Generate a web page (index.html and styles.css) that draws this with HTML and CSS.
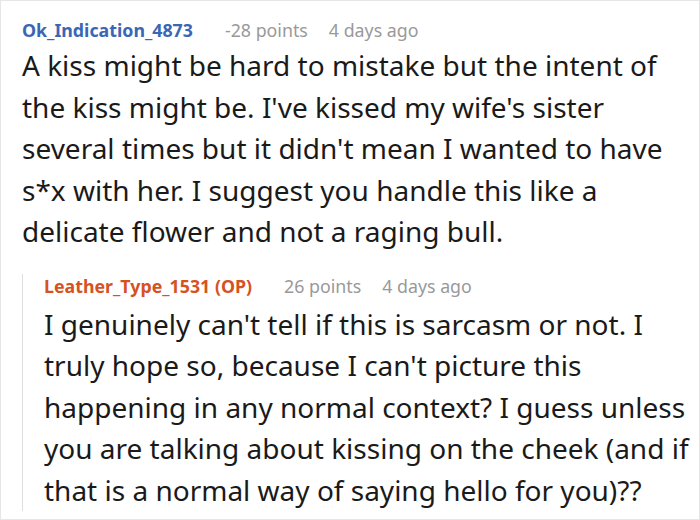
FILE: index.html
```html
<!DOCTYPE html>
<html>
<head>
<meta charset="utf-8">
<link rel="stylesheet" href="styles.css">
</head>
<body>
<div class="frame">
  <div class="comment">
    <div class="meta">
      <span class="author blue">Ok_Indication_4873</span>
      <span class="points">-28 points</span>
      <span class="time">4 days ago</span>
    </div>
    <div class="body">A kiss might be hard to mistake but the intent of the kiss might be. I've kissed my wife's sister several times but it didn't mean I wanted to have s*x with her. I suggest you handle this like a delicate flower and not a raging bull.</div>
    <div class="reply">
      <div class="meta">
        <span class="author orange">Leather_Type_1531 (OP)</span>
        <span class="points">26 points</span>
        <span class="time">4 days ago</span>
      </div>
      <div class="body reply-body">I genuinely can't tell if this is sarcasm or not. I truly hope so, because I can't picture this happening in any normal context? I guess unless you are talking about kissing on the cheek (and if that is a normal way of saying hello for you)??</div>
    </div>
  </div>
</div>
</body>
</html>
```
FILE: styles.css
```css
html, body {
  margin: 0;
  padding: 0;
  background: #fff;
}
.frame {
  width: 700px;
  height: 520px;
  box-sizing: border-box;
  border: 1px solid #e6e6e6;
  overflow: hidden;
  font-family: "Noto Sans", sans-serif;
  color: #1a1a1a;
}
.comment {
  padding: 17px 8px 0 21px;
}
.meta {
  display: flex;
  align-items: baseline;
  font-size: 17.8px;
  line-height: 24px;
  color: #999;
}
.author {
  font-weight: bold;
  margin-right: 32px;
}
.points {
  margin-right: 21px;
}
.blue { color: #3a67b5; }
.orange { color: #d4531f; }
.body {
  font-size: 28px;
  line-height: 41.5px;
  margin-top: 3px;
}
.reply {
  margin-top: 21px;
  border-left: 1px solid #dedede;
  padding-left: 21px;
}
.reply-body {
  margin-top: 6px;
}
```
